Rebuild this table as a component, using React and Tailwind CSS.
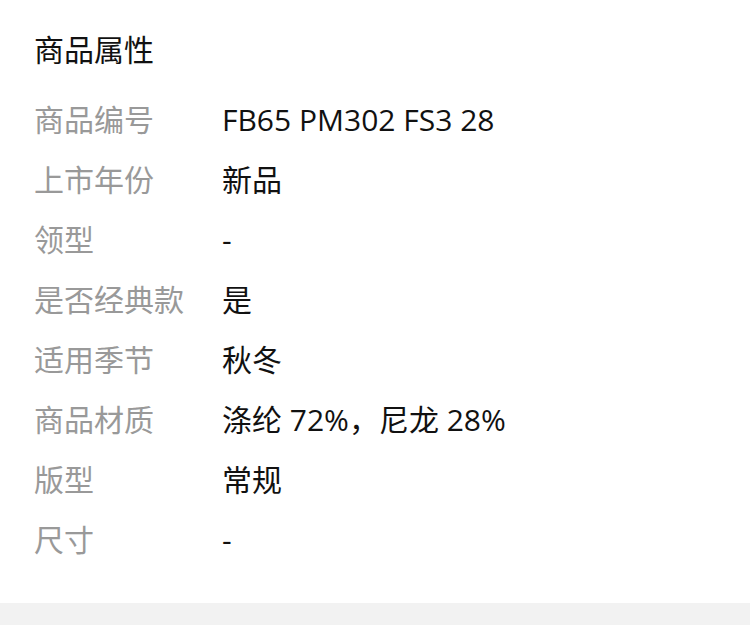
const rows = [
  ['商品编号', 'FB65 PM302 FS3 28'],
  ['上市年份', '新品'],
  ['领型', '-'],
  ['是否经典款', '是'],
  ['适用季节', '秋冬'],
  ['商品材质', '涤纶 72%，尼龙 28%'],
  ['版型', '常规'],
  ['尺寸', '-'],
];

export default function App() {
  return (
    <div className="w-[750px] bg-white font-['Open_Sans','Noto_Sans_CJK_SC',sans-serif]">
      <div className="pl-[34px] pt-[20px] pb-[33px]">
        <h2 className="mb-[10px] h-[60px] leading-[60px] text-[30px] text-[#111]">商品属性</h2>
        {rows.map(([label, value]) => (
          <div key={label} className="flex h-[60px] items-center text-[30px] leading-[60px]">
            <span className="w-[188px] shrink-0 text-[#999]">{label}</span>
            <span className="text-[#111]">{value}</span>
          </div>
        ))}
      </div>
      <div className="h-[40px] bg-[#f2f2f2]" />
    </div>
  );
}
